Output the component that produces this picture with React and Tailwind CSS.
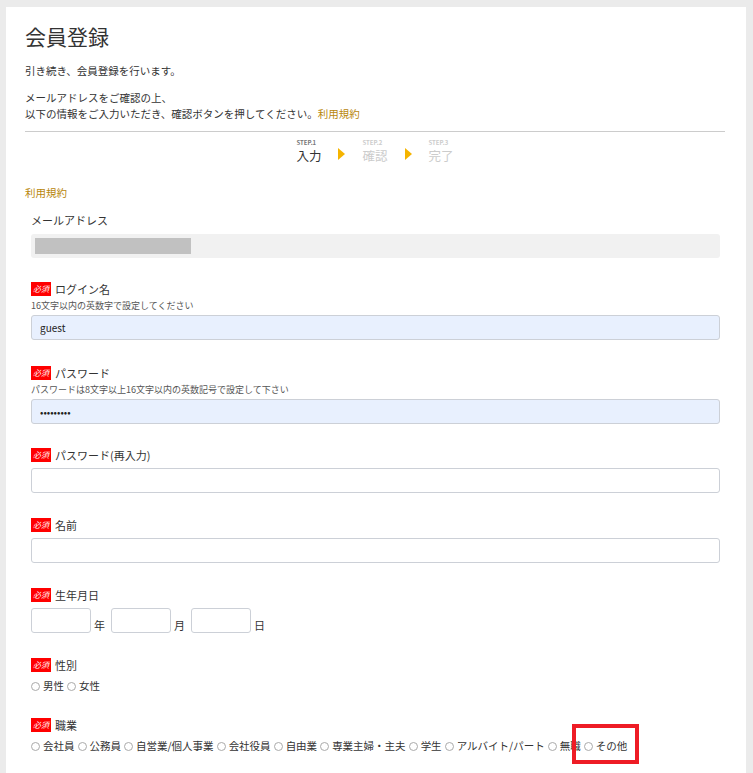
const jobs = ["会社員", "公務員", "自営業/個人事業", "会社役員", "自由業", "専業主婦・主夫", "学生", "アルバイト/パート", "無職"]

function Badge() {
  return (
    <span className="inline-flex h-[14px] w-[20px] items-center justify-center bg-[#ff0000] text-[8px] italic leading-none text-white">
      必須
    </span>
  )
}

function Label({ children, required = true }) {
  return (
    <div className="flex items-center gap-[4px] text-[11px] leading-[16px] text-[#333]">
      {required && <Badge />}
      <span>{children}</span>
    </div>
  )
}

function Radio({ label }) {
  return (
    <span className="inline-flex items-center">
      <span className="mr-[3px] inline-block h-[9px] w-[9px] rounded-full border border-[#aaa] bg-white" />
      <span className="mr-[3px]">{label}</span>
    </span>
  )
}

function Step({ n, label, active }) {
  return (
    <div className="flex flex-col">
      <span className={`text-[6px] font-bold leading-[8px] ${active ? "text-[#777]" : "text-[#ccc]"}`}>STEP.{n}</span>
      <span className={`text-[12.5px] leading-[18px] ${active ? "text-[#333]" : "text-[#ccc]"}`}>{label}</span>
    </div>
  )
}

function Arrow() {
  return <span className="mx-[17px] mt-[3px] h-0 w-0 border-y-[6px] border-l-[7px] border-y-transparent border-l-[#f5b400]" />
}

export default function App() {
  const input = "h-[25px] w-full rounded-[3px] border border-[#ccd0d7] px-[8px] text-[10px] text-[#222] outline-none"
  return (
    <div className="min-h-screen bg-[#ebebeb] pl-[6px] pr-[7px] pt-[7px]" style={{ fontFamily: '"Noto Sans CJK JP", "Noto Sans", sans-serif' }}>
      <div className="bg-white pb-[40px] pl-[19px] pr-[21px] pt-[13px] text-[#333]">
        <h1 className="text-[21px] font-normal leading-[32px] text-[#333]">会員登録</h1>
        <p className="mt-[11px] text-[10.5px] leading-[16px]">引き続き、会員登録を行います。</p>
        <p className="mt-[11px] text-[10.5px] leading-[16px]">
          メールアドレスをご確認の上、
          <br />
          以下の情報をご入力いただき、確認ボタンを押してください。<span className="text-[#b8860b]">利用規約</span>
        </p>
        <hr className="mt-[9px] border-t border-[#ccc]" />

        <div className="mt-[7px] flex items-center justify-center">
          <Step n={1} label="入力" active />
          <Arrow />
          <Step n={2} label="確認" />
          <Arrow />
          <Step n={3} label="完了" />
        </div>

        <p className="mt-[20px] text-[10.5px] leading-[16px] text-[#b8860b]">利用規約</p>

        <div className="pl-[6px] pr-[5px]">
          <div className="mt-[11px]">
            <Label required={false}>メールアドレス</Label>
            <div className="mt-[6px] flex h-[24px] items-center rounded-[3px] bg-[#f1f1f1] px-[4px]">
              <div className="h-[16px] w-[156px] bg-[#c1c1c1]" />
            </div>
          </div>

          <div className="mt-[23px]">
            <Label>ログイン名</Label>
            <p className="mt-[3px] text-[9px] leading-[12px] text-[#555]">16文字以内の英数字で設定してください</p>
            <input className={`${input} mt-[3px] bg-[#e8f0fe]`} defaultValue="guest" readOnly />
          </div>

          <div className="mt-[25px]">
            <Label>パスワード</Label>
            <p className="mt-[3px] text-[9px] leading-[12px] text-[#555]">パスワードは8文字以上16文字以内の英数記号で設定して下さい</p>
            <input type="password" className={`${input} mt-[3px] bg-[#e8f0fe]`} defaultValue="guestpass" readOnly />
          </div>

          <div className="mt-[23px]">
            <Label>パスワード(再入力)</Label>
            <input type="password" className={`${input} mt-[5px] bg-white`} />
          </div>

          <div className="mt-[24px]">
            <Label>名前</Label>
            <input className={`${input} mt-[5px] bg-white`} />
          </div>

          <div className="mt-[24px]">
            <Label>生年月日</Label>
            <div className="mt-[5px] flex items-end text-[11px] leading-[16px]">
              <input className={`${input} !w-[60px] bg-white`} />
              <span className="ml-[3px] mr-[6px]">年</span>
              <input className={`${input} !w-[60px] bg-white`} />
              <span className="ml-[3px] mr-[6px]">月</span>
              <input className={`${input} !w-[60px] bg-white`} />
              <span className="ml-[3px]">日</span>
            </div>
          </div>

          <div className="mt-[24px]">
            <Label>性別</Label>
            <div className="mt-[5px] flex items-center text-[10.5px] leading-[16px]">
              <Radio label="男性" />
              <Radio label="女性" />
            </div>
          </div>

          <div className="mt-[23px]">
            <Label>職業</Label>
            <div className="mt-[5px] flex items-center text-[10.5px] leading-[16px]">
              {jobs.map((j) => (
                <Radio key={j} label={j} />
              ))}
              <span className="relative inline-flex items-center">
                <Radio label="その他" />
                <span className="pointer-events-none absolute -bottom-[10px] -left-[12px] -right-[9px] -top-[14px] border-[4px] border-[#ee1c25]" />
              </span>
            </div>
          </div>
        </div>
      </div>
    </div>
  )
}
